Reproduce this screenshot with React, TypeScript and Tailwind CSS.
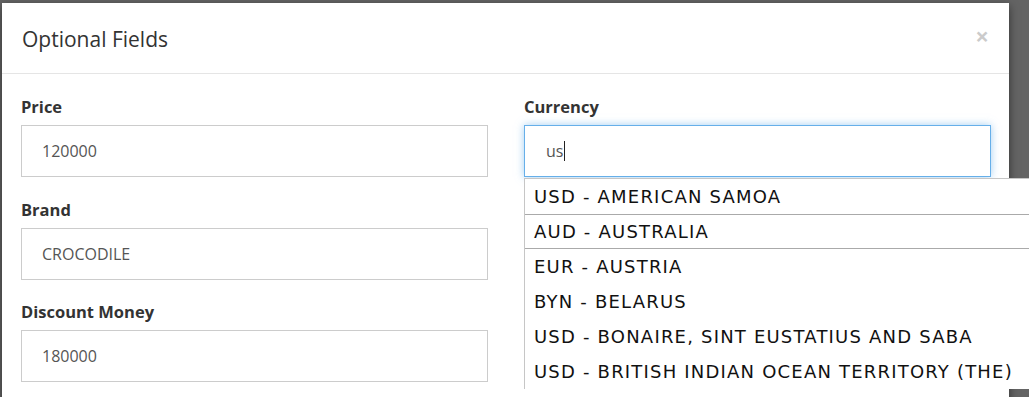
import React from 'react'

const options = [
  'USD - AMERICAN SAMOA',
  'AUD - AUSTRALIA',
  'EUR - AUSTRIA',
  'BYN - BELARUS',
  'USD - BONAIRE, SINT EUSTATIUS AND SABA',
  'USD - BRITISH INDIAN OCEAN TERRITORY (THE)',
]

function Field({ label, value }: { label: string; value: string }) {
  return (
    <div className="mb-[21.5px]">
      <label className="block text-[16.5px] leading-[22px] font-bold text-[#333] mb-[7px]">{label}</label>
      <div className="h-[52px] border border-[#ccc] px-5 flex items-center text-[16px] text-[#555]">
        {value}
      </div>
    </div>
  )
}

export default function App() {
  return (
    <div
      className="w-[1029px] h-[397px] overflow-hidden bg-[#646464] pt-[3px] pl-[2px] relative"
      style={{ fontFamily: '"Open Sans", "Noto Sans", sans-serif' }}
    >
      <div className="w-[1007px] bg-white shadow-[0_3px_9px_rgba(0,0,0,0.5)]">
        <div className="h-[71px] border-b border-[#e5e5e5] flex items-center justify-between pl-5 pr-[20px]">
          <h4 className="text-[21px] text-[#333] pt-[3px]">Optional Fields</h4>
          <span className="text-[24px] font-bold leading-none text-black opacity-20 -mt-[4px]">×</span>
        </div>

        <div className="grid grid-cols-2 gap-x-[36px] pt-[22px] pl-[19px] pr-[18px]">
          <div>
            <Field label="Price" value="120000" />
            <Field label="Brand" value="CROCODILE" />
            <Field label="Discount Money" value="180000" />
          </div>

          <div className="relative">
            <label className="block text-[16.5px] leading-[22px] font-bold text-[#333] mb-[7px]">Currency</label>
            <div className="h-[52px] border border-[#66afe9] shadow-[0_0_8px_rgba(102,175,233,0.6)] pl-[21px] flex items-center text-[16px] text-[#555]">
              us
              <span className="inline-block w-px h-[20px] bg-[#222] ml-px" />
            </div>

            <ul
              className="absolute left-0 top-[82px] w-[560px] bg-white border-l border-t border-[#c6c6c6] text-[18px] tracking-[1.2px] text-[#111]"
              style={{ fontFamily: '"DejaVu Sans", Verdana, sans-serif' }}
            >
              {options.map((opt, i) => (
                <li
                  key={opt}
                  className={
                    i === 1
                      ? 'h-[35px] flex items-center pl-[9px] border-y border-[#aaa] whitespace-nowrap'
                      : 'h-[35px] flex items-center pl-[9px] whitespace-nowrap'
                  }
                >
                  {opt}
                </li>
              ))}
            </ul>
          </div>
        </div>
      </div>
    </div>
  )
}
